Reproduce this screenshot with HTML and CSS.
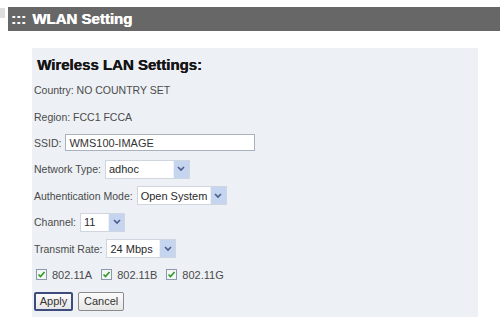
FILE: index.html
```html
<!DOCTYPE html>
<html>
<head>
  <meta charset="UTF-8">
  <title>WLAN Setting</title>
  <link rel="stylesheet" href="styles.css">
</head>
<body>
  <div class="topbar">
    <span class="tab-stub"></span>
    <div class="section-bar"><span class="dots">:::</span> WLAN Setting</div>
  </div>

  <form class="panel" onsubmit="return false;">
    <h2>Wireless LAN Settings:</h2>

    <div class="row">Country: NO COUNTRY SET</div>
    <div class="row">Region: FCC1 FCCA</div>

    <div class="row">
      <label for="ssid">SSID:</label>
      <input type="text" id="ssid" class="ssid" value="WMS100-IMAGE">
    </div>

    <div class="row">
      <label>Network Type:</label>
      <div class="dropdown dd-type">
        <select><option>adhoc</option></select>
        <span class="arrow"><svg width="8" height="6" viewBox="0 0 8 6"><path d="M1 1l3 3 3-3" /></svg></span>
      </div>
    </div>

    <div class="row">
      <label>Authentication Mode:</label>
      <div class="dropdown dd-auth">
        <select><option>Open System</option></select>
        <span class="arrow"><svg width="8" height="6" viewBox="0 0 8 6"><path d="M1 1l3 3 3-3" /></svg></span>
      </div>
    </div>

    <div class="row">
      <label>Channel:</label>
      <div class="dropdown dd-channel">
        <select><option>11</option></select>
        <span class="arrow"><svg width="8" height="6" viewBox="0 0 8 6"><path d="M1 1l3 3 3-3" /></svg></span>
      </div>
    </div>

    <div class="row">
      <label>Transmit Rate:</label>
      <div class="dropdown dd-rate">
        <select><option>24 Mbps</option></select>
        <span class="arrow"><svg width="8" height="6" viewBox="0 0 8 6"><path d="M1 1l3 3 3-3" /></svg></span>
      </div>
    </div>

    <div class="row modes">
      <label class="check"><span class="box"><svg width="9" height="9" viewBox="0 0 9 9"><path d="M1.5 4.5l2 2 4-4.5" /></svg></span>802.11A</label>
      <label class="check"><span class="box"><svg width="9" height="9" viewBox="0 0 9 9"><path d="M1.5 4.5l2 2 4-4.5" /></svg></span>802.11B</label>
      <label class="check"><span class="box"><svg width="9" height="9" viewBox="0 0 9 9"><path d="M1.5 4.5l2 2 4-4.5" /></svg></span>802.11G</label>
    </div>

    <div class="row buttons">
      <button type="submit" class="btn btn-default">Apply</button>
      <button type="button" class="btn">Cancel</button>
    </div>
  </form>
</body>
</html>
```

FILE: styles.css
```css
:root {
  --bar: #676767;
  --panel: #edf1f5;
  --label: #4a4a4a;
  --field-border: #a9b1bd;
  --arrow-bg: #c6d5ef;
  --arrow-ink: #4a5f8c;
}

body {
  margin: 0;
  background: #fff;
  font-family: "Liberation Sans", Arial, sans-serif;
  font-size: 10.5px;
  color: var(--label);
}

.topbar {
  display: flex;
  align-items: flex-start;
  padding-top: 7px;
}

.tab-stub {
  width: 5px;
  height: 10px;
  margin-top: 1px;
  margin-right: 3px;
  background: #dedede;
}

.section-bar {
  width: 492px;
  height: 24px;
  line-height: 24px;
  padding-left: 3px;
  box-sizing: border-box;
  background: var(--bar);
  color: #fff;
  font-size: 15px;
  font-weight: bold;
  text-shadow: 0.5px 0 #fff;
}

.dots {
  margin-right: 2px;
}

.panel {
  width: 446px;
  margin: 17px 0 0 32px;
  padding: 0 0 2px 2px;
  box-sizing: border-box;
  background: var(--panel);
}

h2 {
  margin: 0;
  padding: 4px 0 0 3px;
  line-height: 25px;
  font-size: 15px;
  color: #151515;
  text-shadow: 0.4px 0 #151515;
}

.row {
  display: flex;
  align-items: center;
  gap: 4px;
  height: 26.4px;
  white-space: nowrap;
}

.ssid {
  width: 190px;
  height: 17px;
  box-sizing: border-box;
  margin: 0;
  padding: 0 3px;
  border: 1px solid var(--field-border);
  background: #fff;
  font-family: inherit;
  font-size: 11px;
  color: #333;
}

.dropdown {
  display: flex;
  height: 19px;
  box-sizing: border-box;
  border: 1px solid #cfd6e0;
  background: #fff;
}

.dropdown select {
  flex: 1;
  min-width: 0;
  margin: 0;
  padding: 0 0 0 3px;
  border: none;
  background: transparent;
  -webkit-appearance: none;
  appearance: none;
  font-family: inherit;
  font-size: 11px;
  color: #2a2a2a;
}

.dropdown .arrow {
  display: flex;
  align-items: center;
  justify-content: center;
  width: 15px;
  border-left: 1px solid #eef2f8;
  background: var(--arrow-bg);
}

.arrow path {
  fill: none;
  stroke: var(--arrow-ink);
  stroke-width: 1.7;
}

.dd-type { width: 85px; }
.dd-auth { width: 90px; }
.dd-channel { width: 45px; }
.dd-rate { width: 70px; }

.modes {
  gap: 9px;
  padding-left: 2px;
}

.check {
  display: flex;
  align-items: center;
  gap: 5px;
  font-size: 11px;
}

.check .box {
  display: flex;
  align-items: center;
  justify-content: center;
  width: 9px;
  height: 9px;
  border: 1px solid #8c98ad;
  background: #f3f6f1;
}

.box path {
  fill: none;
  stroke: #2a9a2a;
  stroke-width: 1.6;
}

.buttons {
  gap: 5px;
}

.btn {
  height: 19px;
  margin: 0;
  padding: 0 5px;
  border: 1px solid #8a8a8a;
  border-radius: 2px;
  background: linear-gradient(#fbfbfb, #e6e6e6);
  font-family: inherit;
  font-size: 11px;
  color: #333;
}

.btn-default {
  border: 2px solid #3d4c7c;
  padding: 0 3px;
  width: 39px;
}
```
